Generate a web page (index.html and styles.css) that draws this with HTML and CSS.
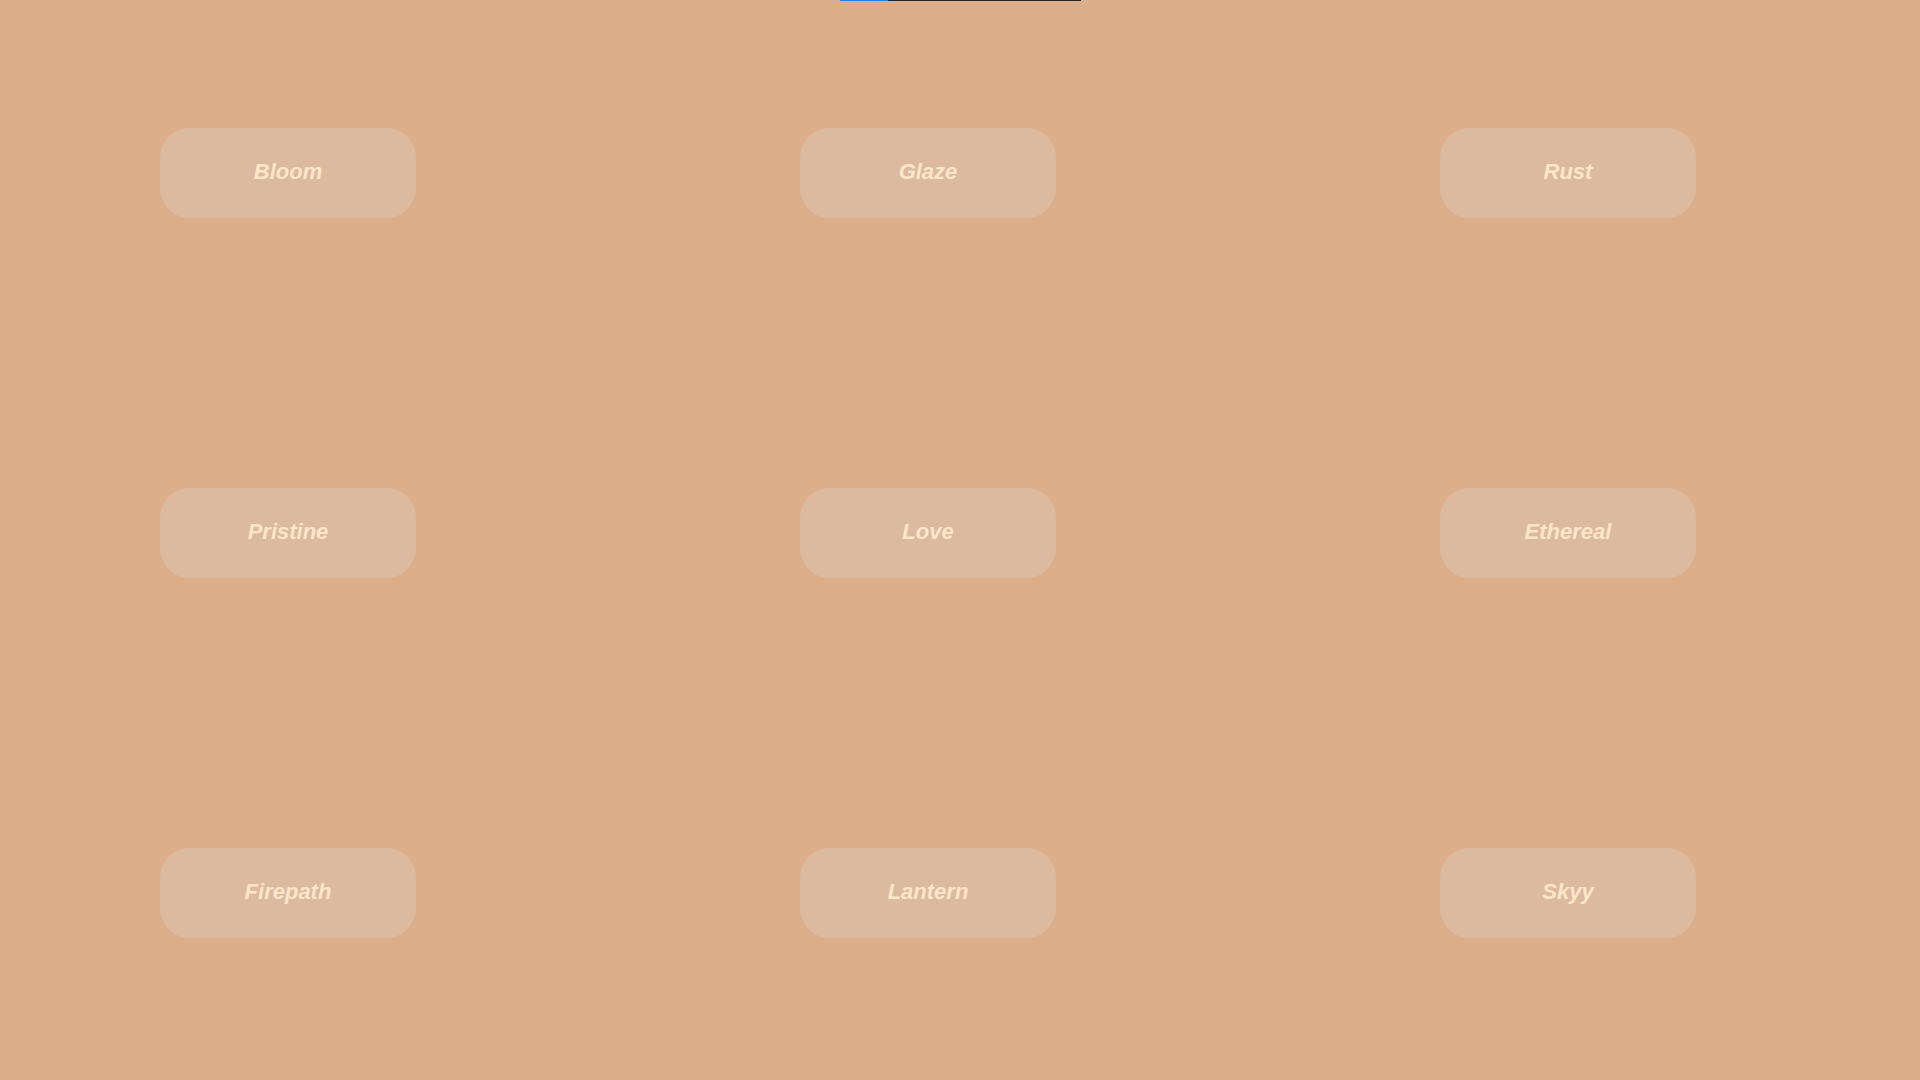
FILE: index.html
```html
<!DOCTYPE html>
<html lang="en">
<head>
<meta charset="utf-8">
<title>Buttons</title>
<link rel="stylesheet" href="styles.css">
</head>
<body>
<div class="progress"><div class="progress-fill" style="width: 20%"></div></div>
<main class="grid">
  <div class="cell"><button class="pill">Bloom</button></div>
  <div class="cell"><button class="pill">Glaze</button></div>
  <div class="cell"><button class="pill">Rust</button></div>
  <div class="cell"><button class="pill">Pristine</button></div>
  <div class="cell"><button class="pill">Love</button></div>
  <div class="cell"><button class="pill">Ethereal</button></div>
  <div class="cell"><button class="pill">Firepath</button></div>
  <div class="cell"><button class="pill">Lantern</button></div>
  <div class="cell"><button class="pill">Skyy</button></div>
</main>
</body>
</html>
```

FILE: styles.css
```css
html, body {
  margin: 0;
  padding: 0;
  background: #dcaf8a;
  font-family: "Liberation Sans", Arial, sans-serif;
}

.progress {
  position: absolute;
  top: 0;
  left: 840px;
  width: 241px;
  height: 1px;
  background: #2a2420;
}

.progress-fill {
  height: 100%;
  background: #1e88e5;
}

.grid {
  display: grid;
  grid-template-columns: repeat(3, 640px);
  grid-template-rows: repeat(3, 360px);
  width: 1920px;
  height: 1080px;
}

.cell {
  padding: 128px 0 0 160px;
}

.pill {
  width: 256px;
  height: 90px;
  border: none;
  border-radius: 30px;
  background: #dcbaa0;
  color: #fde6c9;
  font-family: "Liberation Sans", Arial, sans-serif;
  font-weight: bold;
  font-style: italic;
  font-size: 22px;
  padding: 0 0 3px 0;
  display: flex;
  align-items: center;
  justify-content: center;
  cursor: pointer;
}
```
